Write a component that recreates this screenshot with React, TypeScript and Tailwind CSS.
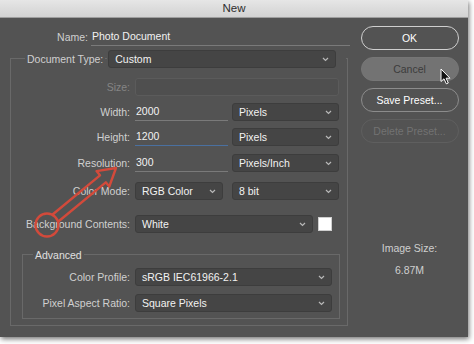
import React from 'react';

const Chevron = () => (
  <svg width="7" height="5" viewBox="0 0 7 5" className="shrink-0">
    <path d="M1 1l2.5 2.5L6 1" fill="none" stroke="#b8b8b8" strokeWidth="1.2" />
  </svg>
);

function Select({ value, className = '', disabled = false }: { value?: string; className?: string; disabled?: boolean }) {
  return (
    <div
      className={`h-[18px] flex items-center justify-between px-[6px] rounded-[3px] border whitespace-nowrap ${
        disabled ? 'bg-[#4f4f4f] border-[#5b5b5b]' : 'bg-[#454545] border-[#3d3d3d] text-[#f2f2f2]'
      } ${className}`}
    >
      <span>{value}</span>
      {!disabled && <Chevron />}
    </div>
  );
}

function Field({ value, className = '', focused = false }: { value: string; className?: string; focused?: boolean }) {
  return (
    <div
      className={`h-[18px] flex items-center pl-[1px] border-b whitespace-nowrap ${
        focused ? 'border-[#4a70a0]' : 'border-[#7a7a7a]'
      } text-[#f2f2f2] ${className}`}
    >
      {value}
    </div>
  );
}

function Label({ text, className = '', dim = false }: { text: string; className?: string; dim?: boolean }) {
  return (
    <div className={`text-right shrink-0 whitespace-nowrap ${dim ? 'text-[#858585]' : 'text-[#d0d0d0]'} ${className}`}>
      {text}
    </div>
  );
}

function Button({ text, variant }: { text: string; variant: 'ok' | 'cancel' | 'normal' | 'disabled' }) {
  const styles = {
    ok: 'border-[#cfcfcf] text-white',
    cancel: 'border-[#767676] bg-[#737373] text-[#3c3c3c]',
    normal: 'border-[#8c8c8c] text-white',
    disabled: 'border-[#5f5f5f] text-[#727272]',
  }[variant];
  return (
    <div className={`h-[24px] w-[98px] rounded-full border-[1.5px] flex items-center justify-center whitespace-nowrap ${styles}`}>
      {text}
    </div>
  );
}

export default function App() {
  return (
    <div className="w-[474px] h-[344px] bg-white relative overflow-hidden font-['Liberation_Sans',Arial,sans-serif] text-[10.5px] leading-none">
      <div className="w-[468px] h-[337px] bg-[#535353] shadow-[1px_2px_5px_rgba(0,0,0,0.55)] flex flex-col">
        <div className="h-[18px] shrink-0 bg-gradient-to-b from-[#e6e6e6] to-[#d2d2d2] border-b border-[#9e9e9e] flex items-center justify-center text-[11.5px] text-[#2e2e2e]">
          New
        </div>

        <div className="flex flex-1">
          {/* left column */}
          <div className="w-[350px] shrink-0">
            <div className="mt-[10px] flex items-center">
              <Label text="Name:" className="w-[88px]" />
              <Field value="Photo Document" className="ml-[3px] flex-1" />
            </div>

            <div className="ml-[10px] mt-[12px] w-[338px] h-[268px] border border-[#696969]">
              <div className="-mt-[9px] flex items-center">
                <div className="ml-[14px] px-[2px] bg-[#535353] text-[#d0d0d0] whitespace-nowrap">Document Type:</div>
                <div className="ml-[2px] bg-[#535353] pl-[1px] pr-[10px]">
                  <Select value="Custom" className="w-[228px]" />
                </div>
              </div>

              <div className="mt-[10px] flex items-center">
                <Label text="Size:" dim className="w-[119px]" />
                <Select disabled className="ml-[5px] w-[204px]" />
              </div>

              <div className="mt-[7px] flex items-center">
                <Label text="Width:" className="w-[119px]" />
                <Field value="2000" className="ml-[5px] w-[93px]" />
                <Select value="Pixels" className="ml-[4px] w-[107px]" />
              </div>

              <div className="mt-[7px] flex items-center">
                <Label text="Height:" className="w-[119px]" />
                <Field value="1200" focused className="ml-[5px] w-[93px]" />
                <Select value="Pixels" className="ml-[4px] w-[107px]" />
              </div>

              <div className="mt-[8px] flex items-center">
                <Label text="Resolution:" className="w-[119px]" />
                <Field value="300" className="ml-[5px] w-[93px]" />
                <Select value="Pixels/Inch" className="ml-[4px] w-[107px]" />
              </div>

              <div className="mt-[10px] flex items-center">
                <Label text="Color Mode:" className="w-[119px]" />
                <Select value="RGB Color" className="ml-[5px] w-[88px]" />
                <Select value="8 bit" className="ml-[9px] w-[107px]" />
              </div>

              <div className="mt-[15px] flex items-center">
                <Label text="Background Contents:" className="w-[119px]" />
                <Select value="White" className="ml-[5px] w-[178px]" />
                <div className="ml-[5px] w-[14px] h-[14px] bg-white border border-[#cfcfcf]" />
              </div>

              <div className="ml-[11px] mt-[21px] w-[318px] h-[65px] border border-[#696969]">
                <div className="-mt-[7px] flex">
                  <div className="ml-[10px] px-[2px] h-[14px] flex items-center bg-[#535353] text-[#e0e0e0]">Advanced</div>
                </div>
                <div className="mt-[6px] flex items-center">
                  <Label text="Color Profile:" className="w-[107px]" />
                  <Select value="sRGB IEC61966-2.1" className="ml-[5px] w-[197px]" />
                </div>
                <div className="mt-[8px] flex items-center">
                  <Label text="Pixel Aspect Ratio:" className="w-[107px]" />
                  <Select value="Square Pixels" className="ml-[5px] w-[197px]" />
                </div>
              </div>
            </div>
          </div>

          {/* right column */}
          <div className="flex-1 flex flex-col items-center pl-[1px] pt-[8px]">
            <div className="flex flex-col gap-[7px]">
              <Button text="OK" variant="ok" />
              <Button text="Cancel" variant="cancel" />
              <Button text="Save Preset..." variant="normal" />
              <Button text="Delete Preset..." variant="disabled" />
            </div>
            <div className="mt-[100px] text-[#cfcfcf]">Image Size:</div>
            <div className="mt-[11px] text-[#cfcfcf]">6.87M</div>
          </div>
        </div>
      </div>

      {/* red annotation arrow */}
      <svg className="absolute left-0 top-0 pointer-events-none" width="474" height="344" viewBox="0 0 474 344">
        <g fill="none" stroke="#d24a3b" strokeWidth="2.4" strokeLinejoin="round">
          <circle cx="47" cy="225" r="11.5" />
          <path d="M58.4 221.5 L105.8 182.3 L109.3 186.5 L116 168 L96.5 171.1 L100 175.3 L52.6 214.5" />
        </g>
      </svg>

      {/* mouse cursor */}
      <svg className="absolute left-[440px] top-[68px] pointer-events-none" width="12" height="17" viewBox="0 0 12 17">
        <path d="M1 1 L1 13.5 L4 10.8 L6.3 15.8 L8.3 15 L6.1 10.2 L10 10.2 Z" fill="#111" stroke="#fff" strokeWidth="1" strokeLinejoin="round" />
      </svg>
    </div>
  );
}
